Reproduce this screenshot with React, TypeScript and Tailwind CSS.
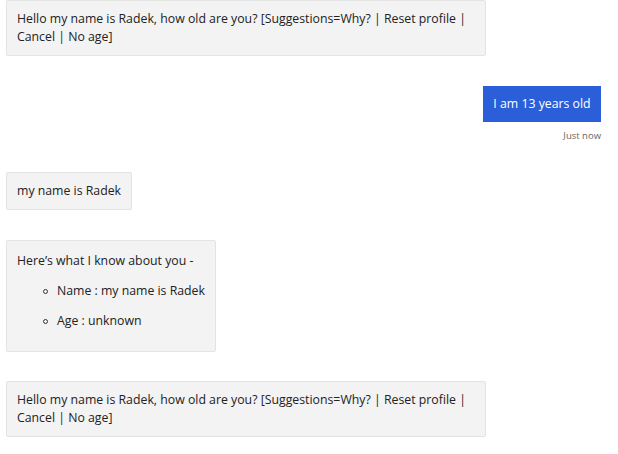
import React from "react";

const font = { fontFamily: '"Open Sans", "Noto Sans", sans-serif' };

function BotBubble({ children, className = "" }: { children: React.ReactNode; className?: string }) {
  return (
    <div
      className={`self-start whitespace-nowrap bg-[#f3f3f3] border border-[#e3e3e3] rounded-[2px] px-[10px] py-[9px] text-[12.3px] leading-[18px] text-[#222] ${className}`}
    >
      {children}
    </div>
  );
}

export default function App() {
  return (
    <div className="w-[618px] h-[454px] bg-white overflow-hidden" style={font}>
      <div className="flex flex-col px-[6px] pr-[17px]">
        <BotBubble className="w-[480px]">
          Hello my name is Radek, how old are you? [Suggestions=Why? | Reset profile |
          <br />
          Cancel | No age]
        </BotBubble>

        <div className="mt-[30px] self-end flex flex-col items-end">
          <div className="bg-[#2b5fd9] text-white whitespace-nowrap text-[12.3px] leading-[18px] px-[10px] py-[9px] w-[118px] text-center">
            I am 13 years old
          </div>
          <div className="mt-[8px] text-[9.5px] text-[#666] leading-[12px]">Just now</div>
        </div>

        <BotBubble className="mt-[30px] w-[126px]">my name is Radek</BotBubble>

        <BotBubble className="mt-[30px] w-[210px] pt-[11px] pb-[21px]">
          <div>Here’s what I know about you -</div>
          <ul className="mt-[12px] pl-[26px] flex flex-col gap-[12px]">
            <li className="flex items-center gap-[9px]">
              <span className="w-[5px] h-[5px] rounded-full border border-[#333]" />
              <span>Name : my name is Radek</span>
            </li>
            <li className="flex items-center gap-[9px]">
              <span className="w-[5px] h-[5px] rounded-full border border-[#333]" />
              <span>Age : unknown</span>
            </li>
          </ul>
        </BotBubble>

        <BotBubble className="mt-[29px] w-[480px]">
          Hello my name is Radek, how old are you? [Suggestions=Why? | Reset profile |
          <br />
          Cancel | No age]
        </BotBubble>
      </div>
    </div>
  );
}
